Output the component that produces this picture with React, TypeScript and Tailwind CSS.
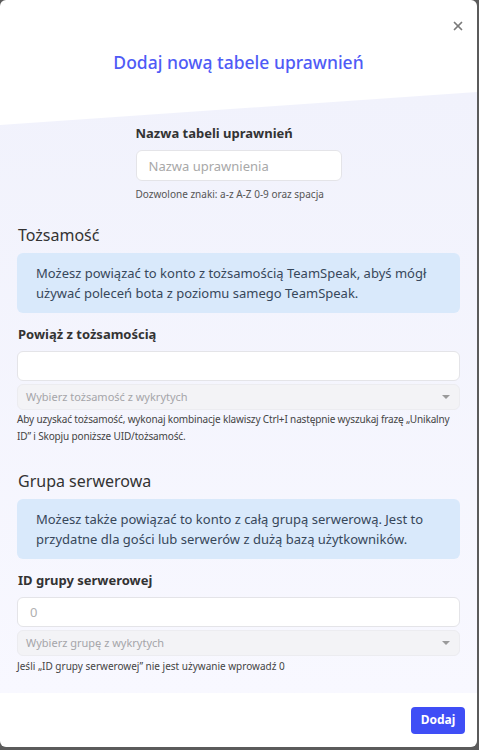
import { X } from "lucide-react";

function InfoBox({ children }: { children: React.ReactNode }) {
  return (
    <div className="mt-2 rounded-md bg-[#d9e9fb] py-[10px] pl-[19px] pr-4 text-[13px] leading-5 text-[#37475a]">
      {children}
    </div>
  );
}

function PickSelect({ placeholder }: { placeholder: string }) {
  return (
    <div className="mt-[3px] flex h-[26px] items-center justify-between rounded-md border border-[#ececf0] bg-[#f3f3f6] pl-2 pr-[9px] text-[11px] text-[#a5a5a9]">
      <span>{placeholder}</span>
      <span className="h-0 w-0 border-x-[4px] border-t-[4px] border-x-transparent border-t-[#9a9a9a]" />
    </div>
  );
}

export default function App() {
  return (
    <div
      className="min-h-screen bg-[#5b5b5b]"
      style={{ fontFamily: '"Noto Sans", "Open Sans", sans-serif' }}
    >
      <div className="flex h-[747px] w-[477px] flex-col overflow-hidden rounded-md bg-white">
        {/* Header */}
        <div className="relative h-[92px] pt-[50px] text-center">
          <button className="absolute right-[12px] top-[19px] text-[#7a7a7a]">
            <X size={14} strokeWidth={3} />
          </button>
          <h2 className="text-[17.5px] font-medium leading-6 text-[#4f5bf6]">
            Dodaj nową tabele uprawnień
          </h2>
        </div>

        {/* Body, slanted top edge */}
        <div className="bg-gradient-to-b from-[#f1f2fc] to-[#f8f8ff] px-[17px] pb-[18px] pt-[33px] [clip-path:polygon(0_33px,100%_0,100%_100%,0_100%)]">
          <div className="mx-auto w-[206px]">
            <label className="block text-[13px] font-bold leading-4 text-[#333]">
              Nazwa tabeli uprawnień
            </label>
            <input
              className="mt-[9px] h-[31px] w-full rounded-md border border-[#e4e4e8] bg-white px-3 text-[13px] text-[#333] outline-none placeholder:text-[#a8a8a8]"
              placeholder="Nazwa uprawnienia"
            />
            <p className="mt-[7px] whitespace-nowrap text-[10px] leading-[13px] text-[#555]">
              Dozwolone znaki: a-z A-Z 0-9 oraz spacja
            </p>
          </div>

          <h3 className="mt-6 pl-px text-[16px] leading-5 text-[#333]">Tożsamość</h3>
          <InfoBox>
            Możesz powiązać to konto z tożsamością TeamSpeak, abyś mógł
            <br />
            używać poleceń bota z poziomu samego TeamSpeak.
          </InfoBox>

          <label className="mt-[13px] block pl-px text-[13px] font-bold leading-4 text-[#333]">
            Powiąż z tożsamością
          </label>
          <input className="mt-[9px] h-[30px] w-full rounded-md border border-[#e4e4e8] bg-white px-3 text-[13px] outline-none" />
          <PickSelect placeholder="Wybierz tożsamość z wykrytych" />
          <p className="mt-px whitespace-nowrap text-[10px] leading-[17px] tracking-[-0.15px] text-[#444]">
            Aby uzyskać tożsamość, wykonaj kombinacje klawiszy Ctrl+I następnie
            wyszukaj frazę „Unikalny
            <br />
            ID” i Skopju poniższe UID/tożsamość.
          </p>

          <h3 className="mt-[26px] pl-px text-[16px] leading-5 text-[#333]">
            Grupa serwerowa
          </h3>
          <InfoBox>
            Możesz także powiązać to konto z całą grupą serwerową. Jest to
            <br />
            przydatne dla gości lub serwerów z dużą bazą użytkowników.
          </InfoBox>

          <label className="mt-[13px] block pl-px text-[13px] font-bold leading-4 text-[#333]">
            ID grupy serwerowej
          </label>
          <input
            className="mt-[9px] h-[30px] w-full rounded-md border border-[#e4e4e8] bg-white px-3 text-[13px] outline-none placeholder:text-[#b0b0b0]"
            placeholder="0"
          />
          <PickSelect placeholder="Wybierz grupę z wykrytych" />
          <p className="mt-[2px] text-[10px] leading-[17px] text-[#444]">
            Jeśli „ID grupy serwerowej” nie jest używanie wprowadź 0
          </p>
        </div>

        {/* Footer */}
        <div className="flex flex-1 items-center justify-end pr-3">
          <button className="h-[27px] w-[54px] rounded bg-[#3f4ef6] text-[12px] font-bold text-white">
            Dodaj
          </button>
        </div>
      </div>
    </div>
  );
}
